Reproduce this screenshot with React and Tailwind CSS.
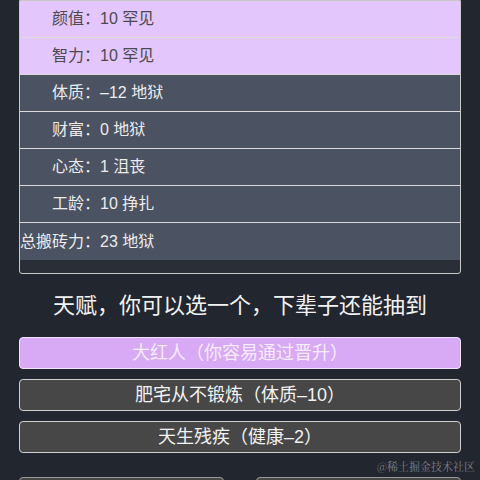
import React from "react";

const rows = [
  { label: "颜值：", value: "10 罕见", hl: true },
  { label: "智力：", value: "10 罕见", hl: true },
  { label: "体质：", value: "–12 地狱" },
  { label: "财富：", value: "0 地狱" },
  { label: "心态：", value: "1 沮丧" },
  { label: "工龄：", value: "10 挣扎" },
  { label: "总搬砖力：", value: "23 地狱", last: true },
];

export default function App() {
  return (
    <div
      className="relative w-[480px] h-[480px] overflow-hidden bg-[#22262e]"
      style={{ fontFamily: '"Liberation Sans", "Noto Sans CJK SC", sans-serif' }}
    >
      <div className="mx-[19px] border border-[#c8c8c8] rounded-b-[3px] bg-[#2a2e36] pb-[13px]">
        {rows.map((r, i) => (
          <div
            key={i}
            className={
              "flex items-center h-[37px] text-[16px] " +
              (r.hl ? "bg-[#e3c6fb] text-[#4a4a50] " : "bg-[#4b5261] text-[#ececec] ") +
              (r.last ? "" : "border-b border-[#dcdcdc]")
            }
          >
            <span className="w-[80px] text-right whitespace-nowrap">{r.label}</span>
            <span className="whitespace-nowrap">{r.value}</span>
          </div>
        ))}
      </div>

      <div className="mt-[17px] text-center text-[22px] leading-[30px] text-[#f2f2f2]">
        天赋，你可以选一个，下辈子还能抽到
      </div>

      <div className="mx-[19px] mt-[16px] flex flex-col gap-[10px]">
        <div className="h-[32px] flex items-center justify-center rounded-[4px] border border-[#f0e4fb] bg-[#d8aaf6] text-[18px] text-[#f6ecff]">
          大红人（你容易通过晋升）
        </div>
        <div className="h-[32px] flex items-center justify-center rounded-[4px] border border-[#cfcfcf] bg-[#474747] text-[18px] text-[#f2f2f2]">
          肥宅从不锻炼（体质–10）
        </div>
        <div className="h-[32px] flex items-center justify-center rounded-[4px] border border-[#cfcfcf] bg-[#474747] text-[18px] text-[#f2f2f2]">
          天生残疾（健康–2）
        </div>
      </div>

      <div className="mx-[19px] mt-[24px] flex justify-between">
        <div className="w-[205px] h-[32px] rounded-[4px] border border-[#9a9a9a] bg-[#474747]"></div>
        <div className="w-[205px] h-[32px] rounded-[4px] border border-[#9a9a9a] bg-[#474747]"></div>
      </div>

      <div
        className="absolute right-[5px] top-[459px] text-[11px] leading-[14px] text-[#7b7f86]"
        style={{ fontFamily: '"Noto Serif CJK SC", "Noto Sans CJK SC", serif' }}
      >
        @稀土掘金技术社区
      </div>
    </div>
  );
}
